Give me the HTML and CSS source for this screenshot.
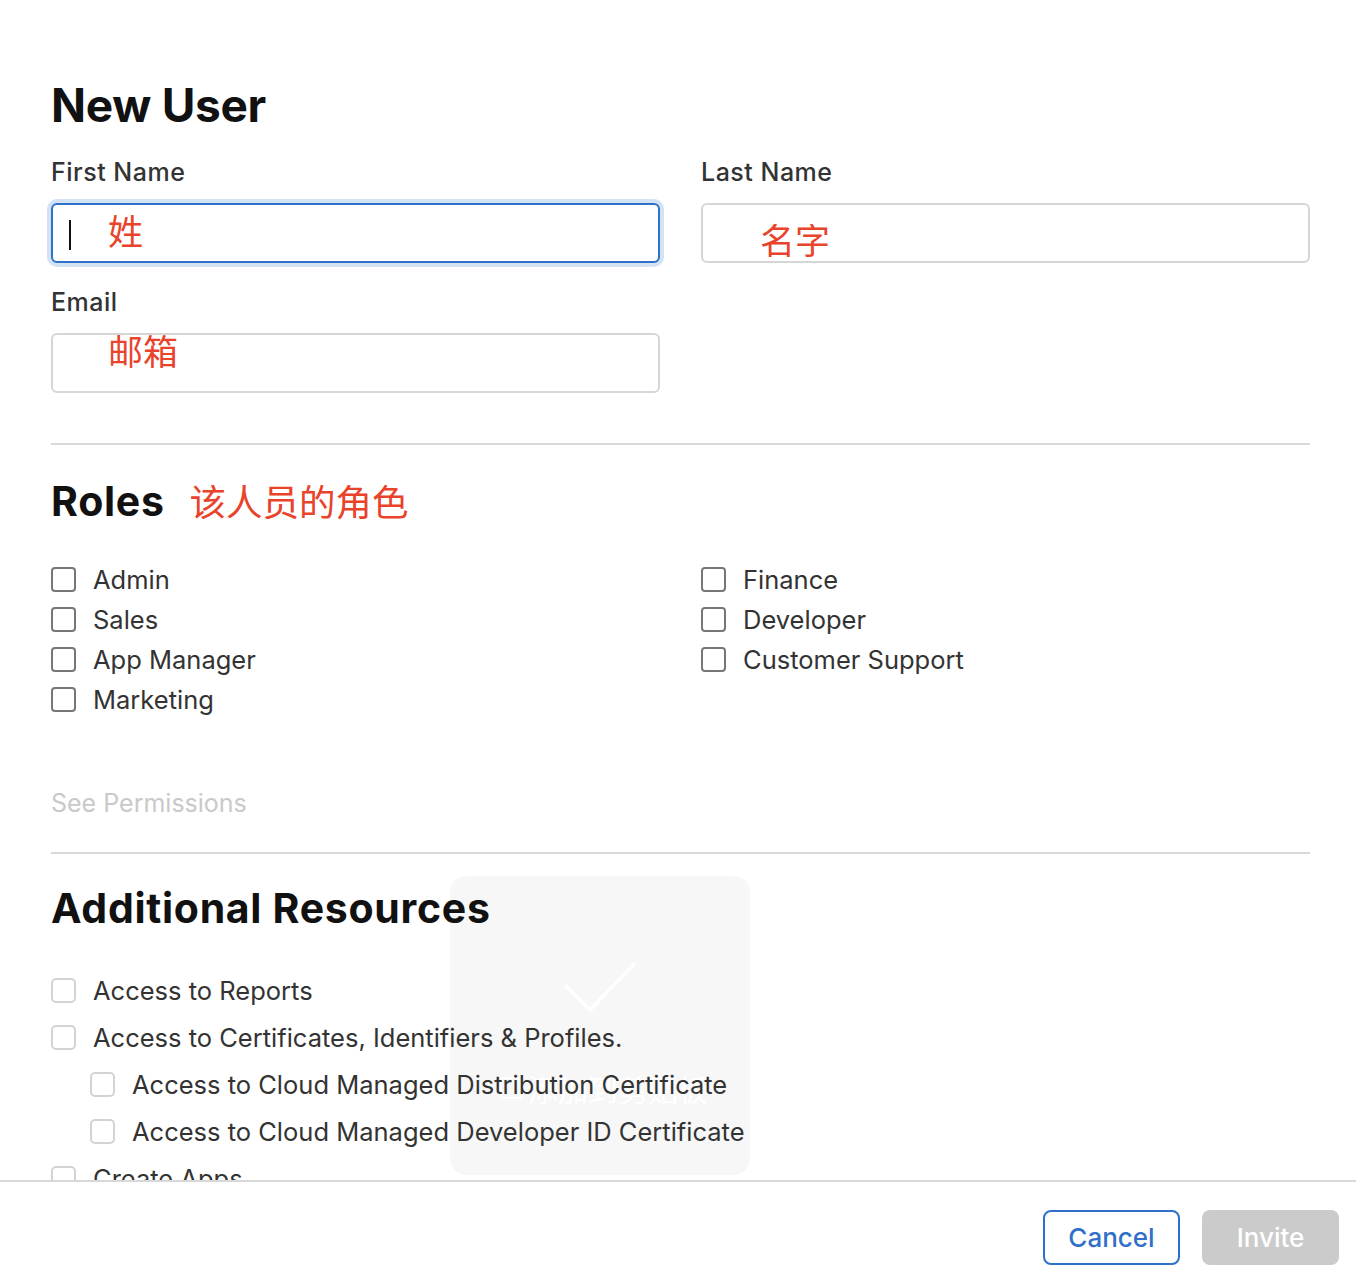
FILE: index.html
```html
<!DOCTYPE html>
<html lang="en">
<head>
<meta charset="utf-8">
<title>New User</title>
<link rel="stylesheet" href="styles.css">
</head>
<body>
<div class="dialog">
  <div class="scroll">
    <div class="toast">
      <svg class="toast-check" width="80" height="60" viewBox="0 0 80 60"><path d="M8 28 L32 52 L76 6" fill="none" stroke="#fff" stroke-width="3.5" stroke-linecap="round" stroke-linejoin="round"/></svg>
      <div class="toast-text"><span class="toast-icon"></span>添加到剪贴板</div>
    </div>
    <div class="content">
      <h1 class="title">New User</h1>
      <div class="grid">
        <div class="field">
          <label class="label">First Name</label>
          <div class="input focused"><span class="caret"></span><span class="red cjk v1">姓</span></div>
        </div>
        <div class="field">
          <label class="label">Last Name</label>
          <div class="input"><span class="red cjk v2">名字</span></div>
        </div>
        <div class="field">
          <label class="label">Email</label>
          <div class="input"><span class="red cjk v3">邮箱</span></div>
        </div>
      </div>
      <hr class="rule r1">
      <div class="heading-row">
        <h2 class="h2">Roles</h2>
        <span class="red cjk note">该人员的角色</span>
      </div>
      <div class="roles">
        <ul class="list">
          <li class="item"><span class="box"></span>Admin</li>
          <li class="item"><span class="box"></span>Sales</li>
          <li class="item"><span class="box"></span>App Manager</li>
          <li class="item"><span class="box"></span>Marketing</li>
        </ul>
        <ul class="list">
          <li class="item"><span class="box"></span>Finance</li>
          <li class="item"><span class="box"></span>Developer</li>
          <li class="item"><span class="box"></span>Customer Support</li>
        </ul>
      </div>
      <div class="perm">See Permissions</div>
      <hr class="rule r2">
      <h2 class="h2 add">Additional Resources</h2>
      <ul class="list res">
        <li class="item"><span class="box light"></span>Access to Reports</li>
        <li class="item"><span class="box light"></span>Access to Certificates, Identifiers &amp; Profiles.</li>
        <li class="item sub"><span class="box light"></span>Access to Cloud Managed Distribution Certificate</li>
        <li class="item sub"><span class="box light"></span>Access to Cloud Managed Developer ID Certificate</li>
        <li class="item"><span class="box light"></span>Create Apps</li>
      </ul>
    </div>
  </div>
  <div class="footer">
    <button class="btn cancel">Cancel</button>
    <button class="btn invite">Invite</button>
  </div>
</div>
</body>
</html>
```
FILE: styles.css
```css
* { box-sizing: border-box; }
html, body { margin: 0; padding: 0; background: #fff; }
body {
  font-family: Inter, "Noto Sans", "Noto Sans CJK SC", sans-serif;
  color: #333;
}
.dialog {
  width: 1356px;
  height: 1268px;
  display: flex;
  flex-direction: column;
}
.scroll {
  flex: 1;
  overflow: hidden;
  position: relative;
}
.content {
  position: relative;
  z-index: 1;
  padding: 0 46px 0 51px;
}
.toast {
  position: absolute;
  left: 450px;
  top: 876px;
  width: 300px;
  height: 299px;
  border-radius: 16px;
  background: #f7f7f7;
  z-index: 0;
}
.toast-check {
  position: absolute;
  left: 108px;
  top: 82px;
}
.toast-text {
  position: absolute;
  left: 50px;
  top: 190px;
  color: #fff;
  font-family: "Noto Sans CJK SC", sans-serif;
  font-size: 30px;
  white-space: nowrap;
  display: flex;
  align-items: center;
  gap: 6px;
}
.toast-icon {
  width: 22px;
  height: 22px;
  border: 2px solid #fff;
  border-radius: 4px;
}
.title {
  margin: 0;
  padding-top: 80px;
  font-size: 46px;
  line-height: 50px;
  font-weight: 700;
  color: #111;
  letter-spacing: -0.3px;
}
.grid {
  display: grid;
  grid-template-columns: 609px 609px;
  column-gap: 41px;
  row-gap: 24px;
  margin-top: 27px;
}
.field { display: flex; flex-direction: column; }
.label {
  font-size: 25px;
  font-weight: 500;
  line-height: 30px;
  color: #333;
  letter-spacing: 0.5px;
}
.input {
  margin-top: 16px;
  height: 60px;
  border: 2px solid #d6d6d6;
  border-radius: 6px;
  position: relative;
  background: #fff;
}
.input.focused {
  border-color: #3070c9;
  box-shadow: 0 0 0 4px #d4e2f5;
}
.caret {
  position: absolute;
  left: 16px;
  top: 15px;
  width: 2px;
  height: 30px;
  background: #111;
}
.red { color: #e9432b; }
.cjk {
  font-family: "Noto Sans CJK SC", sans-serif;
  font-size: 35px;
  position: absolute;
  line-height: 1;
}
.v1 { left: 55px; top: 7px; }
.v2 { left: 57px; top: 16px; }
.v3 { left: 55px; top: -3px; }
.rule {
  border: 0;
  height: 2px;
  background: #d8d8d8;
  margin: 0;
}
.r1 { margin-top: 50px; }
.heading-row {
  display: flex;
  align-items: center;
  gap: 25px;
  margin-top: 34px;
}
.h2 {
  margin: 0;
  font-size: 41px;
  line-height: 44px;
  font-weight: 700;
  color: #111;
  letter-spacing: 0.7px;
}
.note {
  position: static;
  font-size: 36.5px;
}
.roles {
  display: grid;
  grid-template-columns: 650px 1fr;
  margin-top: 36px;
}
.list {
  list-style: none;
  margin: 0;
  padding: 0;
}
.item {
  display: flex;
  align-items: center;
  height: 40px;
  font-size: 25.5px;
  color: #333;
  white-space: nowrap;
}
.box {
  width: 25px;
  height: 25px;
  border: 2px solid #777;
  border-radius: 4px;
  margin-right: 17px;
  flex: none;
}
.box.light {
  border-color: #d3d3d3;
  border-radius: 5px;
}
.perm {
  margin-top: 69px;
  font-size: 25px;
  color: #c9c9c9;
  line-height: 30px;
}
.r2 { margin-top: 34px; }
.add { margin-top: 32px; }
.res { margin-top: 37px; }
.res .item { height: 47px; }
.res .item.sub { padding-left: 39px; }
.footer {
  height: 88px;
  border-top: 2px solid #d8d8d8;
  display: flex;
  justify-content: flex-end;
  align-items: flex-start;
  gap: 22px;
  padding: 28px 17px 0 0;
}
.btn {
  width: 137px;
  height: 55px;
  border-radius: 8px;
  font-family: Inter, "Noto Sans", sans-serif;
  font-size: 26px;
  font-weight: 500;
}
.cancel {
  background: #fff;
  border: 2px solid #3070c9;
  color: #3070c9;
}
.invite {
  background: #cbcbcb;
  border: 0;
  color: #fff;
}
```
